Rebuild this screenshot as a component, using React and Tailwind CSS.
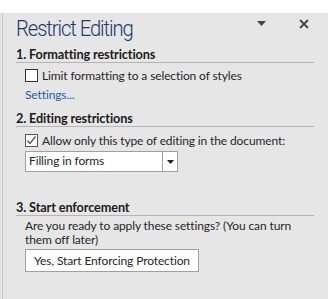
import React from "react";

const font = { fontFamily: 'Lato, "Open Sans", sans-serif' };
const titleFont = { fontFamily: 'Roboto, Lato, sans-serif' };

function Check({ checked }) {
  return (
    <span className={"flex h-[13px] w-[13px] shrink-0 items-center justify-center border bg-white " + (checked ? "border-[#555]" : "border-[#333]")}>
      {checked && (
        <svg width="11" height="11" viewBox="0 0 11 11">
          <path d="M1.5 5.5 L4 8.5 L9.5 1.5" fill="none" stroke="#555" strokeWidth="1.3" />
        </svg>
      )}
    </span>
  );
}

function Header({ children, className }) {
  return (
    <div className={"border-b border-[#b4b4b4] text-[12.7px] font-bold leading-[16px] text-[#1a1a1a] " + className}>
      {children}
    </div>
  );
}

export default function App() {
  return (
    <div className="h-[299px] w-[328px] bg-[#e6e6e6] pl-[2px]" style={font}>
      <div className="h-full border-l border-[#c6c6c6] pl-[13px] pr-[14px] text-[12px] tracking-[-0.12px] text-[#262626]">
        <div className="mt-[13px] flex h-[30px] items-center justify-between">
          <div
            className="origin-left scale-x-[0.9] text-[22.5px] font-light leading-[30px] tracking-[-1.2px] text-[#1f3a6b]"
            style={titleFont}
          >
            Restrict Editing
          </div>
          <div className="flex items-center gap-[33px] pr-[5px] pb-[9px]">
            <svg width="9" height="5" viewBox="0 0 9 5"><path d="M0 0H9L4.5 5Z" fill="#444" /></svg>
            <svg width="10" height="10" viewBox="0 0 10 10"><path d="M1 1L9 9M9 1L1 9" stroke="#444" strokeWidth="1.8" /></svg>
          </div>
        </div>
        <Header className="mt-[3px]">1. Formatting restrictions</Header>
        <div className="pl-[9px]">
          <label className="mt-[6px] flex h-[13px] items-center gap-[4px] leading-[13px]">
            <Check />
            <span>Limit formatting to a selection of styles</span>
          </label>
          <div className="mt-[5px] leading-[16px] text-[#1e5aa5]">Settings...</div>
        </div>
        <Header className="mt-[7px]">2. Editing restrictions</Header>
        <div className="pl-[9px]">
          <label className="mt-[7px] flex h-[13px] items-center gap-[4px] leading-[13px]">
            <Check checked />
            <span>Allow only this type of editing in the document:</span>
          </label>
          <div className="mt-[4px] flex h-[21px] w-[153px] border border-[#a0a0a0] bg-white">
            <div className="flex-1 pl-[3px] leading-[17px]">Filling in forms</div>
            <div className="flex w-[15px] items-center justify-center border-l border-[#a0a0a0]">
              <svg width="7" height="4" viewBox="0 0 7 4"><path d="M0 0H7L3.5 4Z" fill="#222" /></svg>
            </div>
          </div>
        </div>
        <Header className="mt-[27px]">3. Start enforcement</Header>
        <div className="pl-[9px]">
          <p className="mt-[3px] leading-[14px]">Are you ready to apply these settings? (You can turn them off later)</p>
          <button className="mt-[2px] h-[23px] w-[174px] border border-[#a0a0a0] bg-white text-[12px] leading-[21px] text-[#262626]">
            Yes, Start Enforcing Protection
          </button>
        </div>
      </div>
    </div>
  );
}
